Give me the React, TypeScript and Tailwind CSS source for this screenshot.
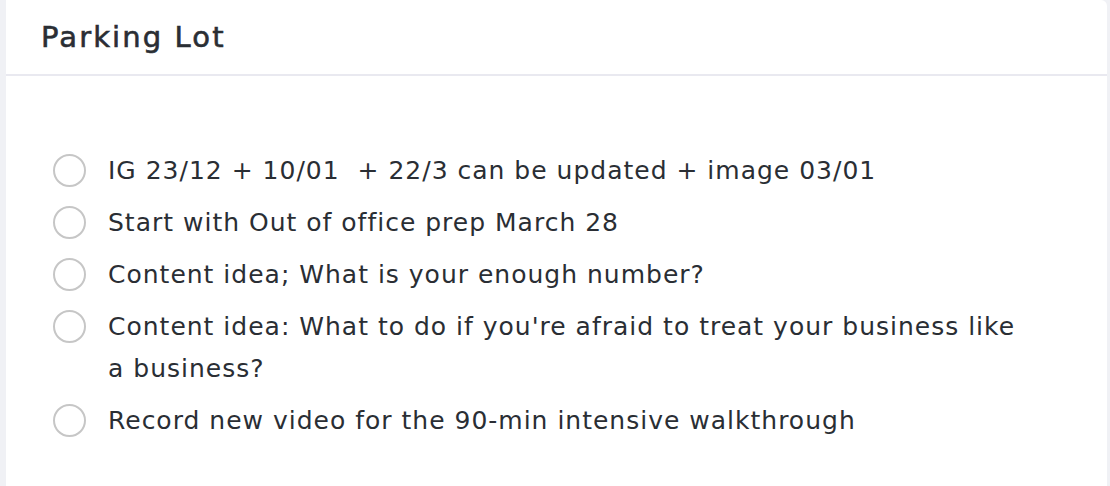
const items = [
  'IG 23/12 + 10/01  + 22/3 can be updated + image 03/01',
  'Start with Out of office prep March 28',
  'Content idea; What is your enough number?',
  "Content idea: What to do if you're afraid to treat your business like a business?",
  'Record new video for the 90-min intensive walkthrough',
]

export default function App() {
  return (
    <div className="h-[486px] w-[1110px] overflow-hidden bg-[#f0f1f5] pl-[6px] pr-[3px]">
      <div className="h-full rounded-tr-[6px] bg-white font-['DejaVu_Sans',sans-serif] text-[#2a2e34]">
        <div className="flex h-[76px] items-center border-b-2 border-[#e9e9f0] pl-[35px] pt-[2px]">
          <h2 className="text-[29px] font-normal tracking-[2.1px] [-webkit-text-stroke:0.6px_#2a2e34]">Parking Lot</h2>
        </div>
        <ul className="flex flex-col gap-[10px] pt-[74px] pl-[47px] pr-[80px]">
          {items.map((t) => (
            <li key={t} className="flex items-start gap-[22px]">
              <span className="mt-[4px] h-[33px] w-[33px] shrink-0 rounded-full border-2 border-[#c6c6c6]" />
              <span className="whitespace-pre-wrap text-[25px] leading-[42px] tracking-[1px]">{t}</span>
            </li>
          ))}
        </ul>
      </div>
    </div>
  )
}
